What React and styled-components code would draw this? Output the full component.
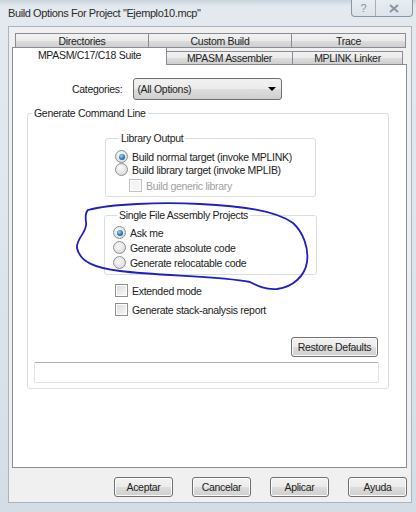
import React from 'react'
import styled, { createGlobalStyle } from 'styled-components'

const Global = createGlobalStyle`
  html, body { margin: 0; padding: 0; }
  body {
    width: 416px;
    height: 512px;
    overflow: hidden;
    font-family: "Liberation Sans", Arial, sans-serif;
    font-size: 10.5px;
    letter-spacing: -0.3px;
    color: #222222;
  }
`

const Window = styled.div`
  position: relative;
  width: 416px;
  height: 512px;
  display: flex;
  flex-direction: column;
  background: linear-gradient(180deg, #c9d3dc 0px, #e3e9ef 6px, #dfe6ed 40%, #d4dde6 100%);
`

const TitleBar = styled.div`
  height: 26px;
  display: flex;
  align-items: flex-start;
  justify-content: space-between;
`

const Title = styled.div`
  padding: 7px 0 0 8px;
  font-size: 11px;
  letter-spacing: -0.4px;
  color: #2b2b2b;
`

const CaptionButtons = styled.div`
  display: flex;
  margin-right: 3px;
  border: 1px solid #8c96a1;
  border-top: none;
  border-radius: 0 0 4px 4px;
  background: linear-gradient(180deg, #e8edf2, #dce3ea);
`

const Caption = styled.div`
  width: ${p => p.w}px;
  height: 16px;
  display: flex;
  align-items: center;
  justify-content: center;
  color: #8a95a1;
  font-size: 11px;
  & + & { border-left: 1px solid #a7b0ba; }
`

const Client = styled.div`
  flex: 1;
  margin: 0 4px 9px 8px;
  background: #f0f0f0;
  border: 1px solid #a9b4bf;
  display: flex;
  flex-direction: column;
  padding: 6px 4px 0 3px;
`

const TabRow = styled.div`
  display: flex;
  height: ${p => p.h}px;
  padding-left: ${p => p.indent}px;
  position: relative;
  z-index: ${p => p.z};
`

const Tab = styled.div`
  width: ${p => p.w}px;
  box-sizing: border-box;
  border: 1px solid #898c95;
  border-bottom: ${p => (p.active ? 'none' : '1px solid #898c95')};
  margin-left: -1px;
  display: flex;
  align-items: center;
  justify-content: center;
  background: ${p => (p.active ? '#ffffff' : 'linear-gradient(180deg, #f2f2f2 0%, #ebebeb 50%, #dddddd 51%, #cfcfcf 100%)')};
  height: ${p => (p.active ? '18px' : p.short ? '14px' : '15px')};
  margin-top: ${p => (p.active ? '-1px' : p.short ? '3px' : '0')};
  padding-bottom: ${p => (p.active ? '3px' : '0')};
  &:first-child { margin-left: 0; }
`

const Panel = styled.div`
  background: #ffffff;
  border: 1px solid #898c95;
  height: 404px;
  box-sizing: border-box;
  display: flex;
  flex-direction: column;
  padding-top: 13px;
`

const FieldRow = styled.div`
  display: flex;
  align-items: center;
  margin-left: 59px;
  gap: 11px;
`

const Combo = styled.div`
  width: 149px;
  height: 22px;
  box-sizing: border-box;
  border: 1px solid #707070;
  border-radius: 3px;
  background: linear-gradient(180deg, #f2f2f2 0%, #ebebeb 50%, #dddddd 51%, #cfcfcf 100%);
  display: flex;
  align-items: center;
  justify-content: space-between;
  padding: 0 5px 0 3px;
`

const Arrow = styled.span`
  width: 0;
  height: 0;
  border-left: 4px solid transparent;
  border-right: 4px solid transparent;
  border-top: 4px solid #000;
`

const Group = styled.fieldset`
  margin: ${p => p.m};
  width: ${p => p.w}px;
  box-sizing: border-box;
  border: 1px solid #d5dfe5;
  border-radius: 3px;
  padding: ${p => p.pad};
  min-width: 0;
`

const Legend = styled.legend`
  padding: 0 2px;
  margin-left: 4px;
  line-height: 13px;
  color: #222222;
`

const Option = styled.div`
  display: flex;
  align-items: center;
  height: ${p => p.h || 13}px;
  margin: ${p => p.m || '0'};
  gap: 4px;
  color: ${p => (p.disabled ? '#a0a0a0' : '#222222')};
`

const Radio = styled.span`
  width: 13px;
  height: 13px;
  flex: none;
  box-sizing: border-box;
  border-radius: 50%;
  border: 1px solid #8e8f8f;
  background: radial-gradient(circle at 40% 35%, #fbfbfb 0%, #e2e2e2 60%, #cfcfcf 100%);
  display: flex;
  align-items: center;
  justify-content: center;
  &::after {
    content: '';
    display: ${p => (p.checked ? 'block' : 'none')};
    width: 6px;
    height: 6px;
    border-radius: 50%;
    background: radial-gradient(circle at 40% 35%, #9fd8f5 0%, #2f7fc0 50%, #123e6e 100%);
  }
`

const Check = styled.span`
  width: 13px;
  height: 13px;
  flex: none;
  box-sizing: border-box;
  border: 1px solid ${p => (p.disabled ? '#c0c0c0' : '#8e8f8f')};
  background: ${p => (p.disabled ? '#f4f4f4' : 'linear-gradient(135deg, #d8d8d8 0%, #eeeeee 60%, #fafafa 100%)')};
  box-shadow: inset 0 0 0 1px #fdfdfd;
`

const ButtonRow = styled.div`
  display: flex;
  justify-content: ${p => p.justify || 'flex-end'};
  gap: ${p => p.gap || 0}px;
  margin: ${p => p.m};
`

const Button = styled.div`
  width: ${p => p.w}px;
  height: 20px;
  box-sizing: border-box;
  border: 1px solid #707070;
  border-radius: 3px;
  background: linear-gradient(180deg, #f2f2f2 0%, #ebebeb 50%, #dddddd 51%, #cfcfcf 100%);
  box-shadow: inset 0 0 0 1px #fbfbfb;
  display: flex;
  align-items: center;
  justify-content: center;
`

const TextField = styled.div`
  margin: 5px 9px 0 6px;
  height: 21px;
  border: 1px solid #e2e3ea;
  border-top-color: #abadb3;
  border-radius: 2px;
  background: #fff;
  box-sizing: border-box;
`

const Scribble = styled.svg`
  position: absolute;
  left: 0;
  top: 0;
  pointer-events: none;
`

export default function App() {
  return (
    <Window>
      <Global />
      <TitleBar>
        <Title>Build Options For Project "Ejemplo10.mcp"</Title>
        <CaptionButtons>
          <Caption w={23}>?</Caption>
          <Caption w={36}>
            <svg width="10" height="9" viewBox="0 0 10 9">
              <path d="M1,1 L9,8 M9,1 L1,8" stroke="#8a95a1" strokeWidth="2" fill="none" />
            </svg>
          </Caption>
        </CaptionButtons>
      </TitleBar>

      <Client>
        <TabRow h={15} indent={3} z={0}>
          <Tab w={134}>Directories</Tab>
          <Tab w={144}>Custom Build</Tab>
          <Tab w={115}>Trace</Tab>
        </TabRow>
        <TabRow h={16} indent={0} z={2}>
          <Tab w={155} active>MPASM/C17/C18 Suite</Tab>
          <Tab w={127} short>MPASM Assembler</Tab>
          <Tab w={111} short>MPLINK Linker</Tab>
        </TabRow>

        <Panel>
          <FieldRow>
            <span>Categories:</span>
            <Combo>
              <span>(All Options)</span>
              <Arrow />
            </Combo>
          </FieldRow>

          <Group m="7px 0 0 14px" w={362} pad="0 0 5px 0">
            <Legend>Generate Command Line</Legend>

            <Group m="12px 0 0 77px" w={211} pad="5px 0 4px 9px">
              <Legend>Library Output</Legend>
              <Option><Radio checked />Build normal target (invoke MPLINK)</Option>
              <Option><Radio />Build library target (invoke MPLIB)</Option>
              <Option m="3px 0 0 14px" disabled><Check disabled />Build generic library</Option>
            </Group>

            <Group m="12px 0 0 76px" w={213} pad="3px 0 4px 8px">
              <Legend>Single File Assembly Projects</Legend>
              <Option h={15}><Radio checked />Ask me</Option>
              <Option h={15}><Radio />Generate absolute code</Option>
              <Option h={15}><Radio />Generate relocatable code</Option>
            </Group>

            <Option h={15} m="8px 0 0 87px"><Check />Extended mode</Option>
            <Option h={15} m="4px 0 0 87px"><Check />Generate stack-analysis report</Option>

            <ButtonRow m="20px 10px 0 0">
              <Button w={87}>Restore Defaults</Button>
            </ButtonRow>
            <TextField />
          </Group>
        </Panel>

        <ButtonRow gap={19} m="9px 0 0 0">
          <Button w={59}>Aceptar</Button>
          <Button w={59}>Cancelar</Button>
          <Button w={59}>Aplicar</Button>
          <Button w={59}>Ayuda</Button>
        </ButtonRow>
      </Client>

      <Scribble width="416" height="512" viewBox="0 0 416 512">
        <path
          d="M88,210 C110,204 160,202 200,204 C240,206 275,210 293,223 C303,232 309,248 307,262 C305,276 293,287 277,289 C266,290 258,286 250,282 C220,276 160,276 120,271 C95,268 80,262 77,248 C76,238 88,232 86,222 C85,215 86,212 88,210"
          fill="none"
          stroke="#1f1fc4"
          strokeWidth="1.8"
          strokeLinecap="round"
        />
      </Scribble>
    </Window>
  )
}
